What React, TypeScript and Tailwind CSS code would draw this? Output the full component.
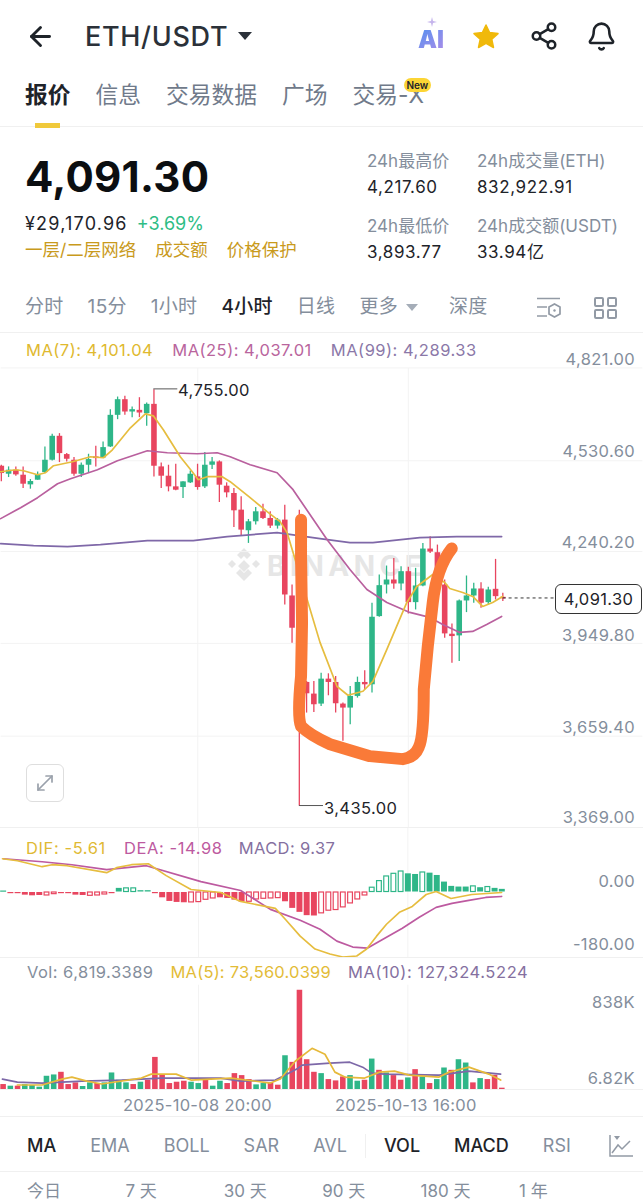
import React from 'react';
import { ArrowLeft, Bell, MoveDiagonal, Share2 } from 'lucide-react';

const RED = '#e8455f';
const GREEN = '#2eb688';
const SLOTS = (i: number) => 0.67 + 7.283 * i;

type Candle = [number, number, number, number, 'r' | 'g'];

// traced from a 3x crop, [wickTop, wickBottom, bodyTop, bodyBottom, side]
const leftCandles: Candle[] = [
  [375, 425, 378, 400, 'r'], [380, 412, 390, 402, 'g'], [380, 408, 390, 404, 'r'], [380, 445, 405, 432, 'r'],
  [418, 447, 424, 434, 'g'], [395, 420, 403, 420, 'g'], [320, 400, 360, 397, 'g'], [282, 362, 288, 360, 'g'],
  [280, 367, 288, 340, 'r'], [340, 365, 343, 357, 'r'], [352, 408, 360, 402, 'r'], [368, 412, 375, 402, 'g'],
  [342, 400, 358, 375, 'g'], [318, 380, 350, 355, 'r'], [305, 355, 322, 353, 'g'], [208, 322, 225, 320, 'g'],
  [170, 238, 178, 225, 'g'], [168, 225, 178, 215, 'r'], [200, 232, 208, 215, 'g'], [172, 232, 210, 218, 'r'],
  [188, 258, 192, 220, 'g'], [148, 410, 192, 378, 'r'], [368, 445, 380, 408, 'r'], [375, 455, 408, 440, 'r'],
  [372, 452, 440, 450, 'r'], [425, 475, 425, 442, 'g'], [392, 430, 402, 428, 'g'], [372, 450, 410, 442, 'r'],
  [337, 445, 375, 440, 'g'], [352, 388, 365, 375, 'g'], [362, 487, 365, 435, 'r'], [428, 473, 438, 458, 'r'],
  [445, 562, 460, 512, 'r'], [470, 588, 510, 570, 'r'], [538, 610, 545, 572, 'g'], [502, 555, 515, 545, 'g'],
  [492, 538, 515, 535, 'r'], [515, 565, 535, 558, 'r'], [535, 567, 540, 558, 'g'],
];

const rightCandles: Candle[] = [
  [45, 345, 90, 315, 'r'], [285, 460, 318, 415, 'r'], [60, 950, 320, 710, 'r'], [575, 670, 578, 612, 'r'],
  [575, 668, 613, 645, 'r'], [550, 650, 568, 643, 'g'], [552, 618, 568, 578, 'r'], [560, 670, 578, 642, 'r'],
  [640, 755, 643, 655, 'r'], [590, 705, 620, 655, 'g'], [562, 625, 578, 620, 'g'], [543, 600, 578, 585, 'r'],
  [340, 610, 382, 585, 'g'], [255, 382, 287, 380, 'g'], [228, 312, 270, 285, 'g'], [205, 298, 270, 282, 'r'],
  [230, 302, 245, 282, 'g'], [232, 372, 245, 338, 'r'], [235, 360, 288, 338, 'g'], [160, 290, 177, 288, 'g'],
  [140, 190, 177, 186, 'r'], [165, 280, 188, 280, 'r'], [270, 445, 285, 432, 'r'], [402, 520, 433, 440, 'r'],
  [330, 515, 333, 438, 'g'], [258, 368, 318, 333, 'g'], [280, 340, 297, 318, 'g'], [278, 355, 297, 340, 'r'],
  [292, 345, 300, 338, 'g'], [208, 330, 298, 320, 'r'], [310, 335, 322, 326, 'r'],
];

const candles = [
  ...leftCandles.map((c) => ({ c, base: 340 })),
  ...rightCandles.map((c) => ({ c, base: 490 })),
];

const ma7 = '0,472 15,470 23,471 37,475 45,473 53,466 72,462 90,457 103,458 112,450 130,428 145,414 153,416 163,430 180,457 192,472 198,480 207,477 222,477 230,482 250,498 267,512 280,522 287,533 293,553 305,593 320,643 337,687 348,696 363,692 373,682 387,650 407,603 417,587 433,575 445,583 450,589 463,593 473,597 483,607 493,603 503,597';
const ma25 = '0,519 20,508 37,498 57,484 70,479 97,470 117,461 147,451 167,453 197,454 217,453 230,457 250,465 277,473 293,490 327,540 350,570 367,590 387,603 410,613 430,618 443,625 460,633 473,632 487,625 502,617';
const ma99 = '0,544 33,546 67,547 100,545 147,541 193,541 227,537 277,533 320,539 350,543 373,543 420,538 457,537 483,537 502,537';

// [depth below zero line at 3x, hollow]; negative depth is a green bar above it
const macdBars: [number, boolean][] = [
  [-3, false], [2, false], [2, false], [8, false], [10, false], [9, false], [9, true], [5, true], [2, false], [2, false],
  [8, false], [9, false], [10, true], [9, true], [6, true], [3, false], [-11, false], [-11, true], [-11, true], [-4, false],
  [-4, false], [3, false], [16, false], [27, false], [30, false], [31, false], [30, true], [29, true], [22, true], [18, true],
  [16, false], [18, false], [23, false], [29, false], [28, true], [21, true], [19, true], [18, true], [17, true], [28, false],
  [48, false], [60, false], [70, false], [71, false], [63, true], [55, true], [53, true], [45, true], [33, true], [21, true],
  [9, true], [-13, true], [-33, true], [-47, true], [-55, true], [-62, true], [-55, false], [-53, false], [-59, true], [-57, false],
  [-50, false], [-30, false], [-17, false], [-15, false], [-15, false], [-17, true], [-13, false], [-15, true], [-11, false], [-8, false],
];

const dif = '0,859 15,861 40,867 50,865 65,866 105,873 115,868 130,865 147,864 165,876 190,890 220,893 240,902 275,909 285,920 300,937 315,950 330,955 343,958 357,957 367,950 377,937 387,925 400,913 413,907 427,895 437,892 452,899 473,895 503,893';
const dea = '1,859 40,862 70,865 105,870 145,866 200,882 240,891 270,910 300,921 320,930 337,942 353,948 368,949 387,938 403,929 420,918 437,908 453,904 470,901 487,898 503,897';

const volTops = [375, 380, 380, 375, 378, 383, 350, 346, 338, 375, 370, 381, 370, 372, 370, 340, 362, 370, 375, 368, 362, 293, 345, 372, 368, 365, 368, 372, 358, 380, 365, 372, 342, 348, 360, 376, 372, 370, 377, 288, 308, 90, 300, 338, 342, 360, 364, 352, 348, 365, 362, 298, 332, 340, 348, 362, 355, 330, 352, 372, 360, 325, 332, 300, 310, 370, 357, 360, 347, 386];
const volSides = 'rgrggggg' + 'rrrgg' + 'rgggg' + 'rgrr' + 'rrrr' + 'gg' + 'rg' + 'grrrr' + 'ggrrg' + 'rrrr' + 'grrrgg' + 'rgrgrrgrg' + 'rggrggrgr' + 'r';
const ma5Vol = '15,1086 40,1086 60,1080 70,1078 85,1082 100,1085 140,1079 150,1075 175,1075 190,1081 230,1079 270,1084 280,1080 295,1062 312,1049 325,1055 335,1073 345,1078 365,1079 380,1073 395,1072 410,1076 440,1078 450,1073 470,1068 490,1075 502,1081';
const ma10Vol = '0,1080 15,1083 40,1084 80,1082 120,1081 160,1079 220,1079 240,1082 275,1081 285,1076 298,1069 302,1066 330,1064 350,1063 363,1068 372,1074 385,1075 440,1076 470,1072 502,1075';

const priceAxis = [
  { label: '4,821.00', top: 16 },
  { label: '4,530.60', top: 108 },
  { label: '4,240.20', top: 199 },
  { label: '3,949.80', top: 292 },
  { label: '3,659.40', top: 384 },
  { label: '3,369.00', top: 474 },
];

const GridLines = ({ rows, y0, y1 }: { rows: number[]; y0: number; y1: number }) => (
  <g stroke="#f3f3f3" strokeWidth="1">
    {rows.map((y) => (
      <line key={y} x1="0" x2="643" y1={y} y2={y} />
    ))}
    <line x1="197.5" x2="197.5" y1={y0} y2={y1} />
    <line x1="408.5" x2="408.5" y1={y0} y2={y1} />
  </g>
);

const Line = ({ points, color, width = 1.7 }: { points: string; color: string; width?: number }) => (
  <polyline points={points} fill="none" stroke={color} strokeWidth={width} strokeLinejoin="round" strokeLinecap="round" />
);

const CandleChart = () => (
  <svg viewBox="0 333 643 495" className="absolute inset-0 h-full w-full">
    <GridLines rows={[368, 461, 552, 644, 737]} y0={368} y1={828} />
    {candles.map(({ c, base }, i) => {
      const x = SLOTS(i);
      const color = c[4] === 'r' ? RED : GREEN;
      return (
        <g key={i}>
          <line x1={x} x2={x} y1={base + c[0] / 3} y2={base + c[1] / 3} stroke={color} strokeWidth="1.3" />
          <rect x={x - 2.8} width="5.6" y={base + c[2] / 3} height={Math.max(1.5, (c[3] - c[2]) / 3)} fill={color} />
        </g>
      );
    })}
    <Line points={ma99} color="#7f68a8" />
    <Line points={ma25} color="#b9609e" />
    <Line points={ma7} color="#e6bd3f" />
    <path d="M153 389H177M299 806.5H323" stroke="#555" strokeWidth="1" fill="none" />
    <path d="M503 598.5H555" stroke="#333" strokeWidth="1" strokeDasharray="3 3" fill="none" />
    <path
      d="M301 520 L301 557 L302 623 L301 677 Q297 718 301 727 Q310 736 330 745 L370 757 L403 760 Q415 758 419 748 Q424 738 424 690 L428 647 L433 603 Q437 568 452 549"
      fill="none"
      stroke="#fa7a38"
      strokeWidth="12"
      strokeLinecap="round"
      strokeLinejoin="round"
    />
  </svg>
);

const MacdChart = () => (
  <svg viewBox="0 828 643 130" className="absolute inset-0 h-full w-full">
    <GridLines rows={[]} y0={828} y1={958} />
    {macdBars.map(([depth, hollow], i) => {
      const x = SLOTS(i);
      const h = Math.abs(depth) / 3;
      const y = depth < 0 ? 892 - h : 892.5;
      const color = depth < 0 ? GREEN : RED;
      return hollow ? (
        <rect key={i} x={x - 2.4} y={y} width="4.8" height={h} fill="#fff" stroke={color} strokeWidth="1.2" />
      ) : (
        <rect key={i} x={x - 3} y={y} width="6" height={Math.max(1.2, h)} fill={color} />
      );
    })}
    <Line points={dea} color="#bd5aa0" />
    <Line points={dif} color="#e6bd3f" />
  </svg>
);

const VolumeChart = () => (
  <svg viewBox="0 958 643 132" className="absolute inset-0 h-full w-full">
    <GridLines rows={[]} y0={985} y1={1090} />
    {volTops.map((top, i) => (
      <rect
        key={i}
        x={SLOTS(i) - 2.8}
        y={960 + top / 3}
        width="5.6"
        height={(390 - top) / 3}
        fill={volSides[i] === 'g' ? GREEN : RED}
      />
    ))}
    <Line points={ma10Vol} color="#7d68a8" />
    <Line points={ma5Vol} color="#e6b93a" />
  </svg>
);

const Star = () => (
  <svg width="30" height="28" viewBox="0 0 30 28">
    <path
      d="M15 3l3.6 7.6 8.4 1-6.2 5.7 1.7 8.2L15 21.4 7.500 25.500l1.700-8.200L3 11.600l8.400-1z"
      fill="#f0b90b"
      stroke="#f0b90b"
      strokeWidth="1.500"
      strokeLinejoin="round"
    />
  </svg>
);

const Badge = () => (
  <div className="relative flex h-[30px] w-[28px] items-end justify-center">
    <svg width="10" height="10" viewBox="0 0 10 10" className="absolute left-[10px] top-[-4px]">
      <path d="M5 0L6 4 10 5 6 6 5 10 4 6 0 5 4 4z" fill="#c5b4ec" />
    </svg>
    <span className="bg-gradient-to-br from-[#4f8ff0] to-[#a98ce8] bg-clip-text text-[24px] font-black leading-[22px] text-transparent">
      AI
    </span>
  </div>
);

const intervals = ['分时', '15分', '1小时', '4小时', '日线'];
const indicators = ['MA', 'EMA', 'BOLL', 'SAR', 'AVL'];

export default function App() {
  return (
    <div className="h-[1199px] w-[643px] overflow-hidden bg-white font-['Inter','Noto_Sans_CJK_SC',sans-serif] text-[#1e2329]">
      <header className="flex h-[72px] items-center pl-[25px] pr-[26px]">
        <ArrowLeft size={31} strokeWidth={2.2} className="text-[#1e2329]" />
        <span className="ml-[29px] text-[27px] font-medium leading-none tracking-[0.7px] text-[#2b3139]">ETH/USDT</span>
        <span className="ml-[10px] h-0 w-0 border-x-[7px] border-t-[8px] border-x-transparent border-t-[#2b3139]" />
        <div className="ml-auto flex items-center">
          <Badge />
          <div className="ml-[26px]"><Star /></div>
          <Share2 size={30} strokeWidth={2} className="ml-[28px]" />
          <Bell size={31} strokeWidth={2} className="ml-[27px]" />
        </div>
      </header>

      <nav className="flex h-[55px] gap-[25px] border-b border-[#f0f0f0] px-[25px] pt-[8px] text-[22.750px] leading-[30px] text-[#707a8a]">
        <div className="relative h-[47px] font-semibold text-[#1e2329]">
          报价
          <span className="absolute bottom-[-1px] left-[10px] h-[5px] w-[25px] bg-[#f0c93b]" />
        </div>
        <span>信息</span>
        <span>交易数据</span>
        <span>广场</span>
        <div className="relative">
          交易-X
          <span className="absolute left-[51px] top-[-2px] rounded-full bg-[#fcd535] px-[3px] text-[10px] font-semibold leading-[14px] text-[#1e2329]">
            New
          </span>
        </div>
      </nav>

      <section className="flex h-[156px] px-[25px] pt-[20px]">
        <div className="w-[342px]">
          <div className="text-[42px] font-bold leading-[60px] tracking-[0.3px] text-[#0b0e11]">4,091.30</div>
          <div className="mt-[5px] flex gap-[9px] text-[18px] leading-[24px]">
            <span className="tracking-[1.200px]">¥29,170.96</span>
            <span className="text-[#2ebd85]">+3.69%</span>
          </div>
          <div className="mt-[2px] flex gap-[19px] text-[17.500px] leading-[24px] text-[#c99a1c]">
            <span>一层/二层网络</span>
            <span>成交额</span>
            <span>价格保护</span>
          </div>
        </div>
        <div className="grid grid-cols-[110px_auto] content-start gap-y-[13px] pt-[1px] text-[17px] leading-[26px]">
          {[
            ['24h最高价', '4,217.60'],
            ['24h成交量(ETH)', '832,922.91'],
            ['24h最低价', '3,893.77'],
            ['24h成交额(USDT)', '33.94亿'],
          ].map(([label, value]) => (
            <div key={label} className="whitespace-nowrap">
              <div className="text-[#848e9c]">{label}</div>
              <div className="tracking-[0.6px]">{value}</div>
            </div>
          ))}
        </div>
      </section>

      <div className="flex h-[50px] items-center gap-6 border-b border-[#f0f0f0] px-[25px] text-[19px] tracking-[0.3px] text-[#848e9c]">
        {intervals.map((t) => (
          <span key={t} className={t === '4小时' ? 'font-medium text-[#1e2329]' : ''}>
            {t}
          </span>
        ))}
        <span className="flex items-center gap-2">
          更多
          <span className="h-0 w-0 border-x-[6px] border-t-[7px] border-x-transparent border-t-[#a5adb8]" />
        </span>
        <span className="ml-[7px]">深度</span>
        <svg width="24" height="22" viewBox="0 0 24 22" fill="none" stroke="#929aa5" strokeWidth="1.700" className="ml-auto mr-[5px]">
          <path d="M0 1.500H23M0 10H10M0 19H10" />
          <path d="M17.500 7l5.500 3v7l-5.500 3-5.500-3v-7z" />
          <circle cx="17.500" cy="13.500" r="1.200" fill="#929aa5" stroke="none" />
        </svg>
        <svg width="23" height="22" viewBox="0 0 23 22" fill="none" stroke="#929aa5" strokeWidth="2" className="ml-[4px] mr-[1px]">
          <rect x="1" y="1" width="8" height="8" rx="1" />
          <rect x="14" y="1" width="8" height="8" rx="1" />
          <rect x="1" y="13" width="8" height="8" rx="1" />
          <rect x="14" y="13" width="8" height="8" rx="1" />
        </svg>
      </div>

      <section className="relative h-[495px] border-b border-[#f0f0f0]">
        <div className="absolute left-[225px] top-[214px] flex items-center gap-[4px] text-[#e6e6e6]">
          <svg width="38" height="38" viewBox="0 0 38 38" fill="currentColor">
            <path d="M19 1l7 7-4 4-3-3-3 3-4-4zM7 13l4 4-4 4-4-4zM31 13l4 4-4 4-4-4zM19 13l6 6-6 6-6-6zM11 26l4-4 4 4 4-4 4 4-8 8z" />
          </svg>
          <span className="text-[28px] font-bold leading-none tracking-[4.500px]">BINANCE</span>
        </div>
        <CandleChart />
        <div className="relative flex h-[35px] items-center gap-[19px] pl-[26px] text-[16.500px] tracking-[0.5px]">
          <span className="text-[#e0b92f]">MA(7): 4,101.04</span>
          <span className="text-[#b9659d]">MA(25): 4,037.01</span>
          <span className="text-[#8b78a8]">MA(99): 4,289.33</span>
        </div>
        {priceAxis.map((p) => (
          <span
            key={p.label}
            className="absolute right-[8px] text-[16.500px] leading-[20px] tracking-[0.35px] text-[#848e9c]"
            style={{ top: p.top }}
          >
            {p.label}
          </span>
        ))}
        <span className="absolute left-[178px] top-[47px] text-[16.500px] leading-[20px] tracking-[0.4px] text-[#1e2329]">4,755.00</span>
        <span className="absolute left-[324px] top-[465px] text-[16.500px] leading-[20px] tracking-[0.4px] text-[#1e2329]">3,435.00</span>
        <span className="absolute left-[555px] top-[251px] flex h-[30px] w-[87px] items-center justify-center rounded-md border border-[#333] bg-white text-[16.500px] tracking-[0.35px] text-[#1e2329]">
          4,091.30
        </span>
        <button className="absolute left-[26px] top-[431px] flex h-[38px] w-[38px] items-center justify-center rounded-md border border-[#dedede] bg-white text-[#9aa1ab]">
          <MoveDiagonal size={24} strokeWidth={1.700} />
        </button>
      </section>

      <section className="relative h-[130px] border-b border-[#f0f0f0]">
        <MacdChart />
        <div className="relative flex h-[41px] items-center gap-[18px] pl-[26px] text-[16.500px] tracking-[0.6px]">
          <span className="text-[#dfba34]">DIF: -5.61</span>
          <span className="text-[#bd5aa0]">DEA: -14.98</span>
          <span className="ml-[-2px] tracking-[0.4px] text-[#85709f]">MACD: 9.37</span>
        </div>
        <span className="absolute right-[8px] top-[43px] text-[16.500px] leading-[20px] tracking-[0.35px] text-[#848e9c]">0.00</span>
        <span className="absolute right-[8px] top-[106px] text-[16.500px] leading-[20px] tracking-[0.35px] text-[#848e9c]">-180.00</span>
      </section>

      <section className="relative h-[132px] border-b border-[#f0f0f0]">
        <VolumeChart />
        <div className="relative flex h-[28px] items-center gap-[17px] pl-[27px] text-[16.500px]">
          <span className="tracking-[0.45px] text-[#848e9c]">Vol: 6,819.3389</span>
          <span className="tracking-[0.2px] text-[#e3bc37]">MA(5): 73,560.0399</span>
          <span className="tracking-[0.6px] text-[#85709f]">MA(10): 127,324.5224</span>
        </div>
        <span className="absolute right-[8px] top-[34px] text-[16.500px] leading-[20px] tracking-[0.35px] text-[#848e9c]">838K</span>
        <span className="absolute right-[8px] top-[110px] text-[16.500px] leading-[20px] tracking-[0.35px] text-[#848e9c]">6.82K</span>
      </section>

      <div className="flex h-[27px] items-center border-b border-[#f0f0f0] pl-[123px] pt-[4px] text-[16.500px] tracking-[0.3px] text-[#848e9c]">
        <span>2025-10-08 20:00</span>
        <span className="ml-[63px]">2025-10-13 16:00</span>
      </div>

      <div className="flex h-[55px] items-center gap-[34px] border-b border-[#f0f0f0] pl-[27px] pt-[3px] text-[18px] text-[#848e9c]">
        {indicators.map((t) => (
          <span key={t} className={t === 'MA' ? 'font-medium text-[#1e2329]' : ''}>
            {t}
          </span>
        ))}
        <span className="ml-[-16px] flex items-center gap-[34px]">
          <span className="mr-[-16px] h-[24px] w-px bg-[#f0f0f0]" />
          <span className="font-medium text-[#1e2329]">VOL</span>
          <span className="font-medium text-[#1e2329]">MACD</span>
          <span>RSI</span>
        </span>
        <svg width="24" height="24" viewBox="0 0 24 24" fill="none" stroke="#929aa5" strokeWidth="1.500" className="ml-[4px]">
          <path d="M1 1V22H24" />
          <path d="M3 19l6-8 4 4 8-8" />
          <path d="M5 2h6l-3 4z" fill="#929aa5" stroke="none" />
        </svg>
      </div>

      <div className="flex pl-[27px] pt-[7px] text-[17px] leading-[24px] text-[#848e9c]">
        {['今日', '7 天', '30 天', '90 天', '180 天', '1 年'].map((t) => (
          <span key={t} className="w-[98.400px] shrink-0">
            {t}
          </span>
        ))}
      </div>
    </div>
  );
}
